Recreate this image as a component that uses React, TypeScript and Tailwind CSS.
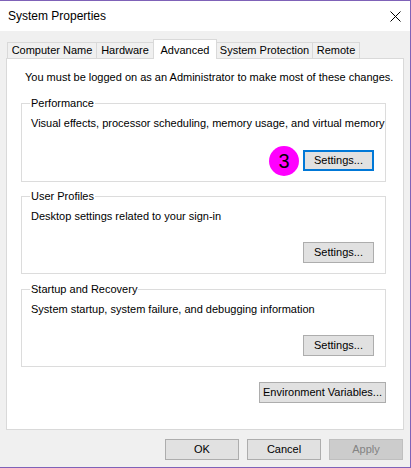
import React from 'react';

const FONT = { fontFamily: '"Liberation Sans", Arial, sans-serif' };

const TABS = [
  { name: 'Computer Name', w: 'w-[90px]' },
  { name: 'Hardware', w: 'w-[58px]' },
  { name: 'Advanced', w: 'w-[64px]' },
  { name: 'System Protection', w: 'w-[97px]' },
  { name: 'Remote', w: 'w-[48px]' },
];

const Button = ({
  label,
  width,
  focused = false,
  disabled = false,
}: {
  label: string;
  width: string;
  focused?: boolean;
  disabled?: boolean;
}) => {
  const base = 'h-[21px] flex items-center justify-center text-[11px] leading-none whitespace-nowrap';
  let look = 'border border-[#adadad] bg-[#e1e1e1] text-black';
  if (focused) look = 'border-2 border-[#0078d7] bg-[#e1e1e1] text-black';
  if (disabled) look = 'border border-[#bfbfbf] bg-[#cccccc] text-[#838383]';
  return <button className={`${base} ${look} ${width}`}>{label}</button>;
};

const GroupBox = ({
  title,
  text,
  className,
  children,
}: {
  title: string;
  text: string;
  className: string;
  children: React.ReactNode;
}) => (
  <div className={`relative border border-[#dcdcdc] px-[9px] pt-[11px] flex flex-col ${className}`}>
    <span className="absolute -top-[9px] left-[8px] bg-white px-[1px] text-[11px] leading-[16px] whitespace-nowrap">
      {title}
    </span>
    <p className="text-[11px] leading-[16px] whitespace-nowrap">{text}</p>
    <div className="flex justify-end items-center mt-auto mb-[10px] pr-[2px]">{children}</div>
  </div>
);

export default function App() {
  return (
    <div
      className="w-[411px] h-[468px] bg-[#f0f0f0] border-t border-r border-b border-[#7f62b8] flex flex-col text-black"
      style={FONT}
    >
      {/* title bar */}
      <div className="h-[30px] bg-white flex items-center justify-between pl-[8px] pr-[9px] shrink-0">
        <span className="text-[12px]">System Properties</span>
        <svg width="11" height="11" viewBox="0 0 11 11" className="mt-[1px]">
          <path d="M0.5 0.5 L10.5 10.5 M10.5 0.5 L0.5 10.5" stroke="#000" strokeWidth="1" fill="none" />
        </svg>
      </div>

      <div className="flex flex-col px-[6px] pt-[7px] flex-1">
        {/* tabs */}
        <div className="flex items-end h-[20px] pl-[1px] relative z-10">
          {TABS.map((t, i) => {
            const active = t.name === 'Advanced';
            return (
              <div
                key={t.name}
                className={
                  active
                    ? `${t.w} h-[20px] -ml-[1px] bg-white border border-b-0 border-[#d9d9d9] text-[11px] flex justify-center items-start pt-[2px] -mb-[1px] whitespace-nowrap`
                    : `${t.w} h-[16px] ${i === 0 ? '' : '-ml-[1px]'} bg-[#f0f0f0] border border-b-0 border-[#d9d9d9] text-[11px] flex justify-center items-center whitespace-nowrap`
                }
              >
                {t.name}
              </div>
            );
          })}
        </div>

        {/* panel */}
        <div className="h-[372px] bg-white border border-[#d9d9d9] flex flex-col pl-[14px] pr-[17px] pt-[10px]">
          <p className="text-[11px] leading-[16px] pl-[4px] whitespace-nowrap">
            You must be logged on as an Administrator to make most of these changes.
          </p>

          <GroupBox
            title="Performance"
            text="Visual effects, processor scheduling, memory usage, and virtual memory"
            className="h-[79px] mt-[18px]"
          >
            <span className="w-[30px] h-[30px] -my-[5px] mr-[4px] rounded-full bg-[#ff00ff] flex items-center justify-center text-[20px] leading-none">
              3
            </span>
            <Button label="Settings..." width="w-[71px]" focused />
          </GroupBox>

          <GroupBox
            title="User Profiles"
            text="Desktop settings related to your sign-in"
            className="h-[78px] mt-[14px]"
          >
            <Button label="Settings..." width="w-[71px]" />
          </GroupBox>

          <GroupBox
            title="Startup and Recovery"
            text="System startup, system failure, and debugging information"
            className="h-[78px] mt-[15px]"
          >
            <Button label="Settings..." width="w-[71px]" />
          </GroupBox>

          <div className="flex justify-end mt-[15px]">
            <Button label="Environment Variables..." width="w-[127px]" />
          </div>
        </div>

        {/* dialog buttons */}
        <div className="flex justify-end gap-[8px] mt-[9px] pr-[1px]">
          <Button label="OK" width="w-[74px]" />
          <Button label="Cancel" width="w-[74px]" />
          <Button label="Apply" width="w-[74px]" disabled />
        </div>
      </div>
    </div>
  );
}
